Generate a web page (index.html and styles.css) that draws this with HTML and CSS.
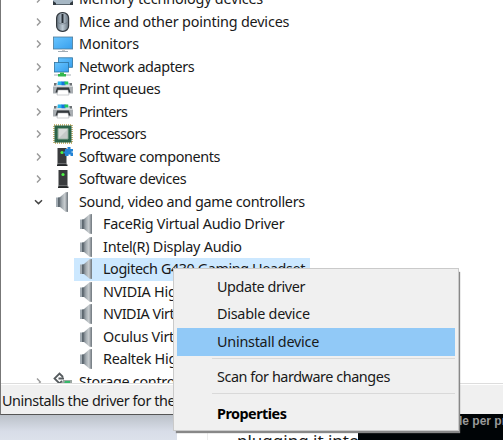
FILE: index.html
```
<!DOCTYPE html>
<html lang="en"><head><meta charset="utf-8"><title>Device Manager</title><link rel="stylesheet" href="styles.css"></head>
<body>
<svg class="defs" width="0" height="0">
<defs>
<linearGradient id="metal" x1="0" x2="1"><stop stop-color="#6f7880"/><stop offset=".3" stop-color="#a5adb2"/><stop offset=".6" stop-color="#c6cbce"/><stop offset="1" stop-color="#858c92"/></linearGradient>
<linearGradient id="screen" x2="1" y2="1"><stop stop-color="#69c5ff"/><stop offset="1" stop-color="#379fed"/></linearGradient>
<linearGradient id="mousebody" x2="1"><stop stop-color="#667481"/><stop offset=".5" stop-color="#bdcad4"/><stop offset="1" stop-color="#65717c"/></linearGradient>
<symbol id="speaker" viewBox="0 0 20 20"><path d="M3 5.500h4.500v9.500H3z" fill="#a3acb3"/><path d="M5 5.500h2v9.500H5z" fill="#5d6870"/><path d="M6.500 5.500 12.500.3H15v19.400h-2.500l-6-5.200z" fill="url(#metal)"/><path d="M13.700.3H15v19.400h-1.300z" fill="#7b8389"/></symbol>
<symbol id="printer" viewBox="0 0 20 20"><path d="M1 4h18v4H1z" fill="#6d7276"/><path d="M4 2.500h12l1 5H3z" fill="#d9e6ee"/><path d="M5 2.500h4v3.500H4.500z" fill="#25b6ec"/><path d="M8.500 2.500h4v4h-4z" fill="#1673dc"/><path d="M11.500 2.500h3.500l.5 3h-4z" fill="#25c85d"/><path d="M0 7h20v7.500H0z" fill="#a9aeb2"/><path d="M0 6.500h20v1.500H0z" fill="#d3d6d8"/><path d="M4 8.500h12l1.500 5h-15z" fill="#34393d"/><path d="M5 11h10l1 5H4z" fill="#fff" stroke="#9a9fa3" stroke-width=".5"/></symbol>
<symbol id="tower" viewBox="0 0 20 20"><path d="M5.500 1h9v18h-9z" fill="#393b3d"/><path d="M5 17.500h10.500V19H5z" fill="#252729"/><path d="M6 16.500h8" stroke="#6b6d6f"/><circle cx="10" cy="5.500" r="1.6" fill="#4df444"/></symbol>
<symbol id="closed" viewBox="0 0 10 10"><path d="m3 1.500 3.300 3.500L3 8.500" fill="none" stroke="#999" stroke-width="1.400"/></symbol>
<symbol id="open" viewBox="0 0 10 10"><path d="m1 3.300 3.500 3.300L8 3.300" fill="none" stroke="#454545" stroke-width="1.500"/></symbol>
</defs></svg>
<main class="desktop">
<section class="manager">
<div class="viewport"><div class="tree">
<div class="row"><svg class="arrow"><use href="#closed"/></svg><svg class="icon" viewBox="0 0 20 20"><path d="M0 1h20v13l-1 2H1l-1-2z" fill="#a6b7c4"/><path d="M0 12 3 14v2H0zM20 12 17 14v2h3z" fill="#313a41"/><path d="M3 15.500h14" stroke="#59656e"/></svg><span class="memory">Memory technology devices</span></div>
<div class="row"><svg class="arrow"><use href="#closed"/></svg><svg class="icon" viewBox="0 0 20 20"><rect x="3.600" y=".600" width="12" height="18.800" rx="5.500" fill="url(#mousebody)" stroke="#33393f" stroke-width="1.200"/><path d="M4 10q5.500 4 11 0" fill="none" stroke="#6d7983" stroke-width=".7"/><path d="M9.500 2v9" stroke="#252d34" stroke-width="2"/></svg><span class="mice">Mice and other pointing devices</span></div>
<div class="row"><svg class="arrow"><use href="#closed"/></svg><svg class="icon" viewBox="0 0 20 20"><rect x=".400" y="3" width="19.200" height="12" fill="url(#screen)" stroke="#4f7c99" stroke-width=".8"/><path d="M9 15.500h3v2H9z" fill="#ccc"/><path d="M5 17.500h10" stroke="#a2adb5"/></svg><span class="monitors">Monitors</span></div>
<div class="row"><svg class="arrow"><use href="#closed"/></svg><svg class="icon" viewBox="0 0 20 20"><rect x="5.500" y=".800" width="14" height="9.500" fill="url(#screen)" stroke="#2e739f" stroke-width=".8"/><rect x="1.500" y="5.500" width="14" height="9.500" fill="url(#screen)" stroke="#2e739f" stroke-width=".8"/><path d="M1 18h17" stroke="#c3cacd" stroke-width="1.500"/><path d="M7 15.500h4v1.500h2v2.500H5V17h2z" fill="#32b74c"/></svg><span class="network">Network adapters</span></div>
<div class="row"><svg class="arrow"><use href="#closed"/></svg><svg class="icon"><use href="#printer"/></svg><span class="queues">Print queues</span></div>
<div class="row"><svg class="arrow"><use href="#closed"/></svg><svg class="icon"><use href="#printer"/></svg><span class="printers">Printers</span></div>
<div class="row"><svg class="arrow"><use href="#closed"/></svg><svg class="icon" viewBox="0 0 20 20"><rect x="1" y="1" width="18" height="18" fill="none" stroke="#b69a48" stroke-width="1.500" stroke-dasharray="1 1"/><path d="M1.500 1.500h17v17h-17z" fill="#2b6449"/><path d="M5 4.500h10v10.500H5z" fill="#d9dcda" stroke="#89a594"/><path d="M6 14 14 6v8z" fill="#c5c9c7"/></svg><span class="processors">Processors</span></div>
<div class="row"><svg class="arrow"><use href="#closed"/></svg><svg class="icon" viewBox="0 0 20 20"><g transform="translate(-1 0)"><use href="#tower" width="20" height="20"/></g><path d="M12 2h2.500V0h3v2H20v2.500h-1.500v1H20V9h-2.500V7.500h-2V9H12V6.500h-1.500v-2H12z" fill="#2384d6"/></svg><span class="components">Software components</span></div>
<div class="row"><svg class="arrow"><use href="#closed"/></svg><svg class="icon"><use href="#tower"/></svg><span class="devices">Software devices</span></div>
<div class="row"><svg class="arrow"><use href="#open"/></svg><svg class="icon"><use href="#speaker"/></svg><span class="sound">Sound, video and game controllers</span></div>
<div class="row child"><svg class="icon"><use href="#speaker"/></svg><span class="facerig">FaceRig Virtual Audio Driver</span></div>
<div class="row child"><svg class="icon"><use href="#speaker"/></svg><span class="intel">Intel(R) Display Audio</span></div>
<div class="row child selected"><svg class="icon"><use href="#speaker"/></svg><span class="logitech">Logitech G430 Gaming Headset</span></div>
<div class="row child"><svg class="icon"><use href="#speaker"/></svg><span>NVIDIA Hig</span></div>
<div class="row child"><svg class="icon"><use href="#speaker"/></svg><span class="virtual">NVIDIA Virt</span></div>
<div class="row child"><svg class="icon"><use href="#speaker"/></svg><span>Oculus Virt</span></div>
<div class="row child"><svg class="icon"><use href="#speaker"/></svg><span>Realtek Hig</span></div>
<div class="row"><svg class="arrow"><use href="#closed"/></svg><svg class="icon" viewBox="0 0 20 20"><path d="M10 5 6.500 1.500 1.500 6.500l5 5L9 9M5.500 6.500H11" fill="none" stroke="#555b5e" stroke-width="1.800"/><path d="M10 8h9v10H6z" fill="#9ba6a1"/><path d="M12 9h5v3h-6z" fill="#35b96a"/></svg><span class="storage">Storage contro</span></div>
</div></div>
<footer class="status"><span>Uninstalls the driver for the</span></footer>
</section>
<section class="background"><div class="wallpaper"></div><div class="page"><p>plugging it into</p></div><div class="dark"><p>le per pr</p></div></section>
<nav class="menu">
<div class="item"><span class="update">Update driver</span></div>
<div class="item"><span class="disable">Disable device</span></div>
<div class="item active"><span class="uninstall">Uninstall device</span></div>
<div class="separator"></div>
<div class="item scan"><span class="scantext">Scan for hardware changes</span></div>
<div class="separator"></div>
<div class="item properties"><span>Properties</span></div>
</nav>
</main></body></html>
```
FILE: styles.css
```
*{box-sizing:border-box}
body{margin:0;font:14.4px/20px "Noto Sans",sans-serif;color:#191919;overflow:hidden}
.defs{position:absolute}
.desktop{position:relative;width:503px;height:440px;overflow:hidden;background:#fff}
.manager{height:415px;border-left:1px solid #777;border-bottom:1px solid #555;display:flex;flex-direction:column}
.viewport{height:383px;overflow:hidden;flex:none}
.tree{margin-top:-12px}
.row{height:22.5px;padding-left:33px;display:flex;align-items:center;white-space:nowrap}
.arrow{width:10px;height:10px;flex:none;margin-right:9px}
.icon{width:20px;height:20px;flex:none;margin-right:6px}
.row span{letter-spacing:-.25px}
.row .memory{letter-spacing:-.2px}
.row .mice{letter-spacing:-.18px}
.row .monitors{letter-spacing:-.15px}
.row .network,.row .queues{letter-spacing:-.4px}
.row .printers,.row .processors{letter-spacing:-.65px}
.row .components,.row .devices{letter-spacing:-.38px}
.row .sound{letter-spacing:-.29px}
.row .logitech{letter-spacing:-.42px}
.row .virtual{letter-spacing:-.45px}
.row .storage{letter-spacing:-.3px}
.child{padding-left:76px}
.selected{width:236px;margin-left:73px;padding-left:3px;background:#cce8ff}
.status{height:31px;border-top:1px solid #ddd;box-shadow:inset 0 1px #fff;background:#f0f0f0;padding:7px 0 0 1px;white-space:nowrap;letter-spacing:-.42px}
.background{height:25px;display:flex}
.wallpaper{width:177px;flex:none;background:linear-gradient(#bbc1c9,#d8dde8 65%,#dce1eb)}
.page{width:181px;flex:none;background:linear-gradient(90deg,#fff 30px,#ededed 30px,#ededed 31px,#fff 31px);padding:15px 0 0 60px;overflow:hidden}
.page p,.dark p{margin:0;white-space:nowrap}
.page p{font-size:17px;line-height:22px}
.dark{flex:1;margin-top:-1px;background:#000406;color:#999;padding-left:101px;overflow:hidden}
.dark p{font:bold 12px/15px "Liberation Sans",sans-serif}
.menu{position:absolute;left:173px;top:268px;width:286px;height:163px;padding:4px 3px 4px 4px;background:#f0f0f0;border:1px solid #cacaca;box-shadow:2px 3px 1px -1px #888}
.item{height:27.5px;padding-left:39px;display:flex;align-items:center;white-space:nowrap;letter-spacing:-.25px}
.update{letter-spacing:-.4px}
.active{background:#91c9f7;margin-left:-1px;padding-left:40px}
.separator{height:1px;background:#d9d9d9;margin:2px 0 5px 34px}
.scan{height:27.5px;letter-spacing:-.44px}
.properties{height:30px;font-weight:700;color:#000;letter-spacing:-.52px}
```
